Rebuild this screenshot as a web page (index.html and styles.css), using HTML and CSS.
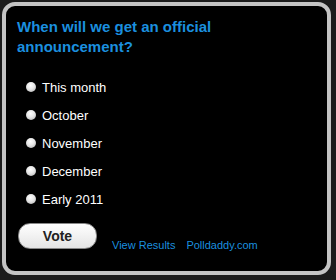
FILE: index.html
```html
<!DOCTYPE html>
<html>
<head>
<meta charset="utf-8">
<link rel="stylesheet" href="styles.css">
</head>
<body>
<div class="poll">
  <div class="question">When will we get an official announcement?</div>
  <ul class="answers">
    <li><span class="radio"></span><span class="label">This month</span></li>
    <li><span class="radio"></span><span class="label">October</span></li>
    <li><span class="radio"></span><span class="label">November</span></li>
    <li><span class="radio"></span><span class="label">December</span></li>
    <li><span class="radio"></span><span class="label">Early 2011</span></li>
  </ul>
  <div class="footer">
    <button class="vote">Vote</button>
    <a class="link results">View Results</a>
    <a class="link">Polldaddy.com</a>
  </div>
</div>
</body>
</html>
```
FILE: styles.css
```css
html, body {
  margin: 0;
  padding: 0;
  background: #1c1c1c;
  width: 336px;
  height: 280px;
  overflow: hidden;
}
body {
  padding: 2px;
  box-sizing: border-box;
  font-family: "Liberation Sans", Arial, Helvetica, sans-serif;
}
.poll {
  width: 329px;
  height: 273px;
  box-sizing: border-box;
  border: 4px solid #c4c4c4;
  border-radius: 13px;
  background: #000;
  padding: 11px 10px 0 11px;
}
.question {
  color: #1b8fdf;
  font-weight: bold;
  font-size: 15px;
  line-height: 20px;
}
.answers {
  list-style: none;
  margin: 16px 0 0 0;
  padding: 0 0 0 9px;
}
.answers li {
  display: flex;
  align-items: center;
  height: 28px;
}
.radio {
  width: 10px;
  height: 10px;
  border-radius: 50%;
  background: radial-gradient(circle at 45% 35%, #ffffff 0%, #e6e6e6 45%, #a8a8a8 100%);
  margin-right: 6px;
}
.label {
  color: #fff;
  font-size: 13px;
}
.footer {
  display: flex;
  align-items: flex-end;
  margin-top: 10px;
}
.vote {
  width: 79px;
  height: 26px;
  border: 1px solid #888;
  border-radius: 12px;
  background: linear-gradient(#ffffff, #e4e4e4);
  font-family: inherit;
  font-weight: bold;
  font-size: 14px;
  color: #222;
  padding: 0;
  margin-left: 1px;
}
.link {
  color: #1b8fdf;
  font-size: 11px;
  line-height: 13px;
  margin-bottom: -3px;
}
.results {
  margin-left: 15px;
  margin-right: 11px;
}
```
